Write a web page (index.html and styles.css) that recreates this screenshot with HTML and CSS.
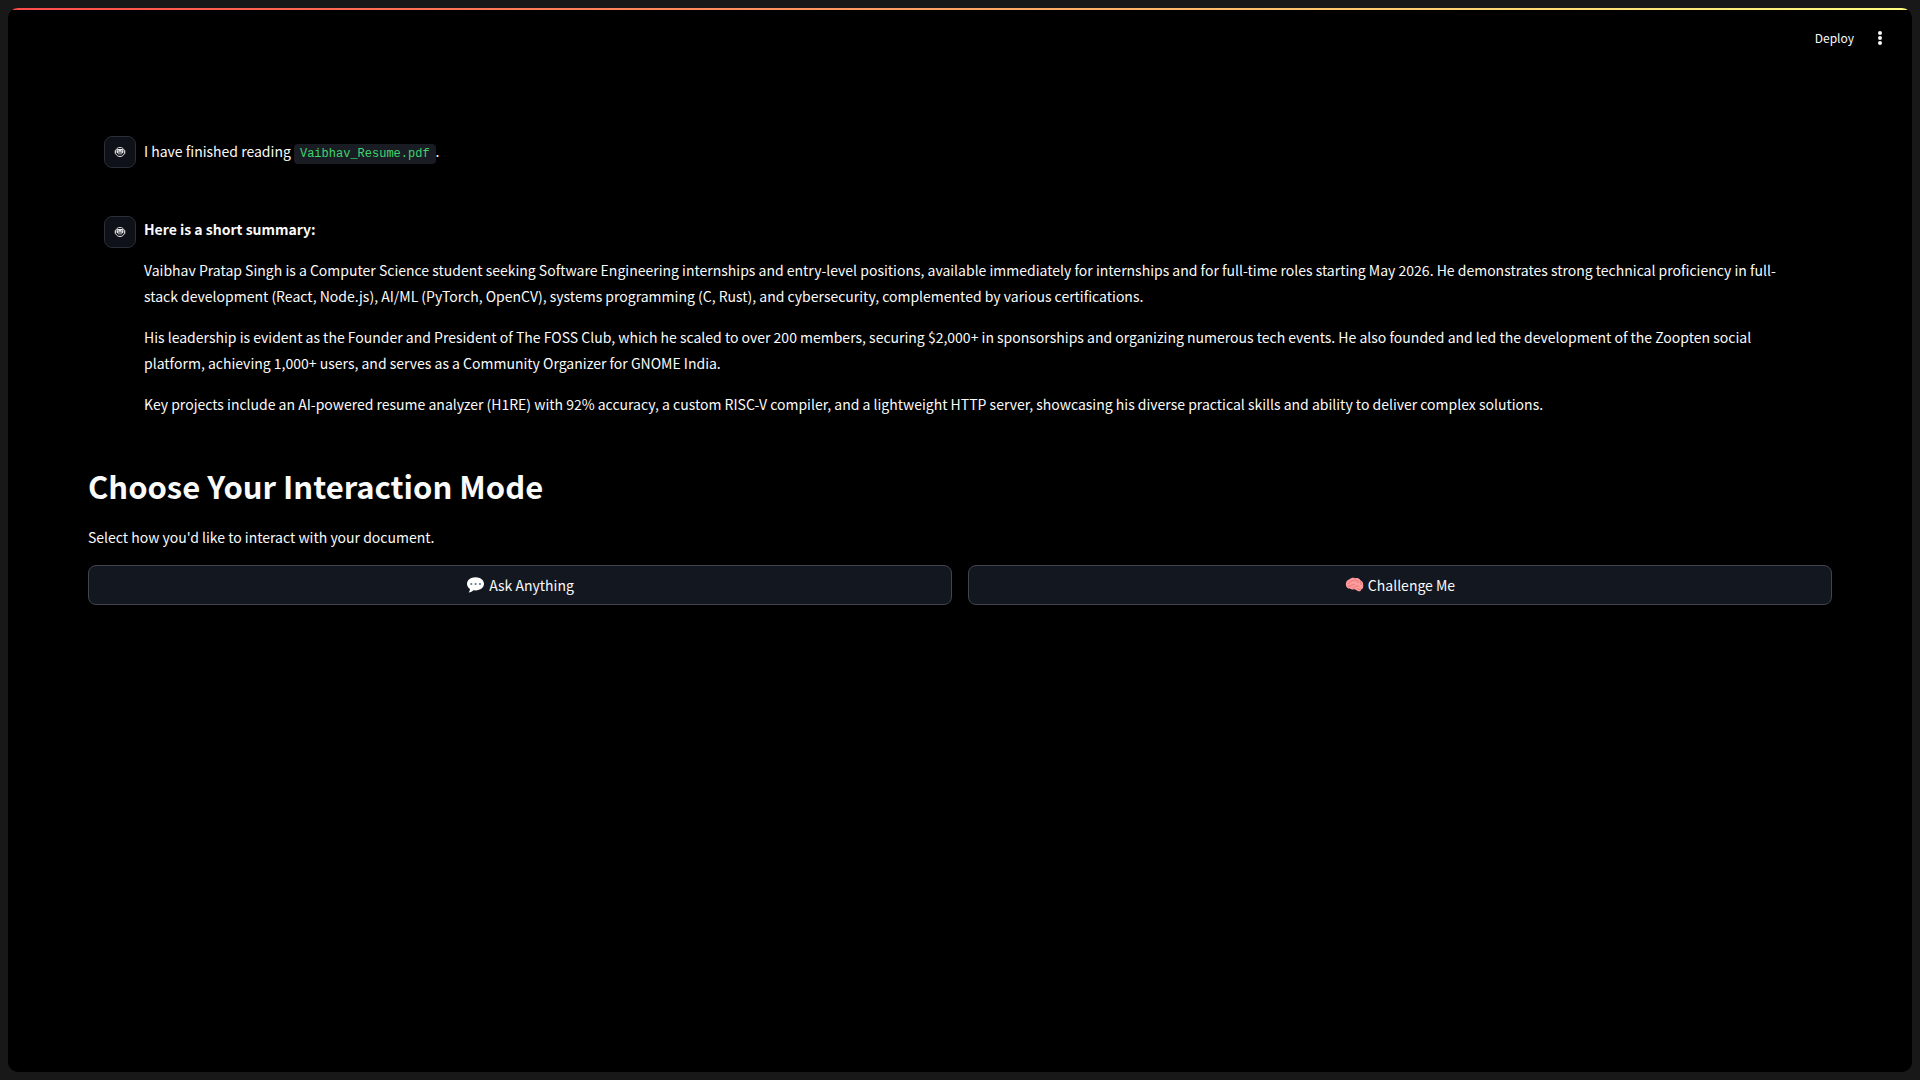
FILE: index.html
```html
<!DOCTYPE html>
<html lang="en">
<head>
<meta charset="utf-8">
<meta name="viewport" content="width=device-width, initial-scale=1">
<title>Document Assistant</title>
<link rel="stylesheet" href="styles.css">
</head>
<body>
<svg class="defs" aria-hidden="true">
  <symbol id="bot" viewBox="0 0 12 12">
    <circle cx="6" cy="6" r="4.6" fill="none" stroke="#d4d4d6" stroke-width="1"/>
    <path d="M1.2 4.5v3M10.8 4.5v3" stroke="#d4d4d6" stroke-width="1"/>
    <rect x="2.6" y="3.1" width="6.8" height="4.3" rx="1.4" fill="#e8e8ea"/>
    <path d="M3.7 4.4l1.5.9M8.3 4.4l-1.5.9M4.2 6.3h3.6" fill="none" stroke="#34363c" stroke-width=".8"/>
    <path d="M4 8.8h4" stroke="#77797f" stroke-width=".8"/>
  </symbol>
</svg>
<div class="app">
  <header class="toolbar">
    <button class="deploy" type="button">Deploy</button>
    <button class="menu" type="button" aria-label="Main menu">
      <svg width="20" height="20" viewBox="0 0 20 20" fill="#fafafa" aria-hidden="true"><circle cx="10" cy="5" r="2"/><circle cx="10" cy="10" r="2"/><circle cx="10" cy="15" r="2"/></svg>
    </button>
  </header>
  <main class="content">
    <article class="message message-short">
      <div class="avatar"><svg width="12" height="12" aria-hidden="true"><use href="#bot"/></svg></div>
      <div class="message-body">
        <p>I have finished reading <code>Vaibhav_Resume.pdf</code>.</p>
      </div>
    </article>
    <article class="message">
      <div class="avatar"><svg width="12" height="12" aria-hidden="true"><use href="#bot"/></svg></div>
      <div class="message-body">
        <p><strong>Here is a short summary:</strong></p>
        <p>Vaibhav Pratap Singh is a Computer Science student seeking Software Engineering internships and entry-level positions, available immediately for internships and for full-time roles starting May 2026. He demonstrates strong technical proficiency in full-stack development (React, Node.js), AI/ML (PyTorch, OpenCV), systems programming (C, Rust), and cybersecurity, complemented by various certifications.</p>
        <p>His leadership is evident as the Founder and President of The FOSS Club, which he scaled to over 200 members, securing $2,000+ in sponsorships and organizing numerous tech events. He also founded and led the development of the Zoopten social platform, achieving 1,000+ users, and serves as a Community Organizer for GNOME India.</p>
        <p>Key projects include an AI-powered resume analyzer (H1RE) with 92% accuracy, a custom RISC-V compiler, and a lightweight HTTP server, showcasing his diverse practical skills and ability to deliver complex solutions.</p>
      </div>
    </article>
    <section class="modes">
      <h1>Choose Your Interaction Mode</h1>
      <p>Select how you'd like to interact with your document.</p>
      <div class="choices">
        <button class="choice" type="button">
          <svg width="19" height="18" viewBox="0 0 19 18" aria-hidden="true"><path d="M9.500 1.200C4.600 1.200 1 4 1 7.800c0 2.200 1.200 4 3 5.200-.1 1.500-.8 2.800-1.400 3.600 2-.2 3.900-1.200 4.800-2.300l2.100.1c4.900 0 8.500-2.800 8.500-6.600s-3.600-6.600-8.500-6.600z" fill="#fff"/><circle cx="5.300" cy="8" r="1.100" fill="#607d8b"/><circle cx="9.600" cy="8" r="1.100" fill="#607d8b"/><circle cx="13.900" cy="8" r="1.100" fill="#607d8b"/></svg>
          <span>Ask Anything</span>
        </button>
        <button class="choice" type="button">
          <svg width="19" height="18" viewBox="0 0 19 18" aria-hidden="true"><path d="M1 9.500C.4 6.500 2 4.200 4.200 3.600 5.800 1.800 8.500 1.500 10 2.200c2-.5 4.200.1 5.200 1.800 2 .9 3.300 3 3 5.200.4 2.200-.5 3.800-2 4.300.2 1.500-1.800 2.300-3.400 1.500-1.200-.5-2.100-1.600-3.600-1.800-1.700.6-3.400.3-4.200-.6C3 12.700 1.200 11.600 1 9.500z" fill="#ff9b9b"/><path d="M3 7.500c1-1.500 2.200-.5 2.800-1.800s2-1.500 3-.8M9.800 2.800c-.3 1.300.7 2 1.800 2s2 .8 1.800 1.700M3.200 10.200c1.200.7 2.300-.6 3.300-.8s1.500-1.300 2.800-.9M8.200 12.400c.3-1.500 1.900-1 2.600-1.900s2-.7 2.800-.1M15.200 5c-.2 1.400 1.300 2 .9 3.500M12.500 12.800c1 .8 2.300.9 3.300.4" fill="none" stroke="#dc6874" stroke-width=".8" stroke-linecap="round"/></svg>
          <span>Challenge Me</span>
        </button>
      </div>
    </section>
  </main>
</div>
</body>
</html>
```
FILE: styles.css
```css
* { box-sizing: border-box; }

body {
  margin: 0;
  padding: 8px;
  min-height: 100vh;
  display: flex;
  background: #181818;
  color: #fafafa;
  font-family: "Noto Sans CJK SC", "Noto Sans", sans-serif;
  font-size: 14px;
  line-height: 26px;
}

p, h1 { margin: 0; }

button {
  font: inherit;
  color: inherit;
  cursor: pointer;
}

.defs {
  position: absolute;
  width: 0;
  height: 0;
}

.app {
  flex: 1;
  min-width: 0;
  background: linear-gradient(90deg, #ff4b4b, #fffd80) top / 100% 2px no-repeat #000;
  border-radius: 10px;
  overflow: hidden;
}

.toolbar {
  display: flex;
  justify-content: flex-end;
  align-items: center;
  gap: 16px;
  height: 60px;
  padding: 0 22px;
}

.deploy, .menu {
  border: 0;
  padding: 0;
  background: none;
}

.deploy { font-size: 12px; }

.menu {
  display: flex;
}

.content { padding: 52px 80px 80px; }

.message {
  display: flex;
  gap: 8px;
  padding: 16px 32px 16px 16px;
}

.message-short {
  align-items: center;
  margin-bottom: 16px;
}

.avatar {
  flex: none;
  display: grid;
  place-items: center;
  width: 32px;
  height: 32px;
  border: 1px solid #2b2d38;
  border-radius: 8px;
  background: #0e1117;
}

.message-body {
  flex: 1;
  min-width: 0;
  display: grid;
  gap: 15px;
}

code {
  padding: 3px 6px;
  border-radius: 4px;
  background: #1a1c24;
  color: #3dd56d;
  font-family: "Liberation Mono", monospace;
  font-size: 12px;
}

.modes { padding-top: 31px; }

h1 {
  font-size: 31px;
  line-height: 44px;
  font-weight: 600;
  margin-bottom: 16px;
}

.choices {
  display: grid;
  grid-template-columns: 1fr 1fr;
  gap: 16px;
  margin-top: 15px;
}

.choice {
  display: flex;
  justify-content: center;
  align-items: center;
  gap: 4px;
  height: 40px;
  border: 1px solid #41444c;
  border-radius: 8px;
  background: #131720;
}
```
